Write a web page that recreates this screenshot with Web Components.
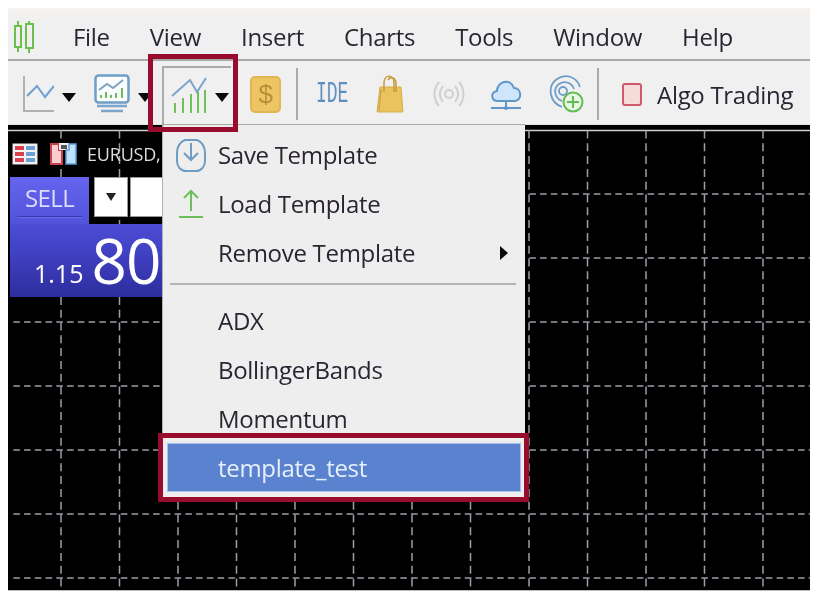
<!DOCTYPE html>
<html lang="en">
<head>
<meta charset="UTF-8">
<title>Chart templates menu</title>
<style>
    body { background: #fff; }
</style>
</head>
<body>
<mt-window>
    <mt-menubar slot="top">
        <svg slot="logo" width="22" height="34" viewBox="0 0 22 34" fill="none" stroke="#6cc04e" stroke-width="2">
            <path d="M5 1v5M5 27v5M16 1v3M16 28v5"/>
            <rect x="2" y="6" width="6" height="21"/>
            <rect x="13" y="4" width="7" height="24"/>
        </svg>
        <span>File</span><span>View</span><span>Insert</span><span>Charts</span><span>Tools</span><span>Window</span><span>Help</span>
    </mt-menubar>
    <mt-toolbar slot="top">
        <tool-btn arrow style="margin-left:14px">
            <svg width="32" height="38" viewBox="0 0 32 38" fill="none">
                <path d="M2 1v35h30" stroke="#b0b0b0" stroke-width="2"/>
                <path d="M5 21l10-10 8 11 9-11" stroke="#6f9fd0" stroke-width="2"/>
            </svg>
        </tool-btn>
        <tool-btn arrow style="margin-left:18px">
            <svg width="36" height="40" viewBox="0 0 36 40" fill="none">
                <rect x="1.5" y="1.5" width="33" height="27" rx="3" fill="#fafcfe" stroke="#6f9dc8" stroke-width="2.5"/>
                <path d="M5 16l8-6 6 4 10-8" stroke="#7ea3c4" stroke-width="2"/>
                <path d="M7 24v-3M12 24v-6M17 24v-3M22 24v-5M28 24v-10" stroke="#6dbb57" stroke-width="2"/>
                <path d="M3 32h30M7 37h22" stroke="#7aa5cc" stroke-width="2.5"/>
            </svg>
        </tool-btn>
        <tool-btn arrow selected style="margin-left:19px">
            <svg width="36" height="40" viewBox="0 0 36 40" fill="none">
                <path d="M1 22L19 6l7 12 9-14" stroke="#7ba6c9" stroke-width="2"/>
                <path d="M4 39V29M12 39V24M20 39V20M27 39V18M34 39V16" stroke="#6fc15c" stroke-width="2"/>
            </svg>
        </tool-btn>
        <tool-btn class="dollar" style="margin-left:21px"><span class="dollar-face">$</span></tool-btn>
        <tool-sep style="margin-left:15px"></tool-sep>
        <tool-btn style="margin-left:18px"><span class="ide">IDE</span></tool-btn>
        <tool-btn style="margin-left:28px">
            <svg width="28" height="38" viewBox="0 0 28 38" fill="none">
                <path d="M4 12L1 37h26l-2-25z" fill="#e8c35e" stroke="#d8ae4a" stroke-width="1"/>
                <path d="M8 17V8c0-9 10-9 10 0v9M12 5c2-4 8-3 8 4v8" stroke="#c89e42" stroke-width="1.6"/>
                <path d="M5 14L3 36" stroke="#cfa64a" stroke-width="1.4"/>
            </svg>
        </tool-btn>
        <tool-btn style="margin-left:29px">
            <svg width="32" height="26" viewBox="0 0 32 26" fill="none" stroke="#cfcfcf" stroke-width="2">
                <circle cx="16" cy="13" r="4"/>
                <path d="M10 5c-4 5-4 11 0 16M22 5c4 5 4 11 0 16M6 1C0 8 0 18 6 25M26 1c6 7 6 17 0 24"/>
            </svg>
        </tool-btn>
        <tool-btn style="margin-left:25px">
            <svg width="32" height="34" viewBox="0 0 32 34" fill="none">
                <path d="M8 24C1 24 0 15 7 14 7 5 20 0 24 11c7 0 9 11 1 13z" fill="#cfe5fb" stroke="#5f97c8" stroke-width="2"/>
                <path d="M1 31h30M16 25v6" stroke="#5f97c8" stroke-width="2"/>
                <circle cx="16" cy="31" r="2" fill="#5f97c8"/>
            </svg>
        </tool-btn>
        <tool-btn style="margin-left:26px">
            <svg width="36" height="40" viewBox="0 0 36 40" fill="none">
                <path d="M14 33C1 28-1 12 9 5c9-6 20-2 23 8" stroke="#6f9dc8" stroke-width="1.8"/>
                <path d="M14 27C6 24 5 14 11 10c6-4 13-1 15 5" stroke="#6f9dc8" stroke-width="1.8"/>
                <circle cx="15" cy="17" r="4" stroke="#6f9dc8" stroke-width="1.8"/>
                <circle cx="25" cy="28" r="9.5" fill="#eaf6e4" stroke="#62bd55" stroke-width="2"/>
                <path d="M25 22v12M19 28h12" stroke="#62bd55" stroke-width="2"/>
            </svg>
        </tool-btn>
        <tool-sep style="margin-left:13px"></tool-sep>
        <tool-btn style="margin-left:23px"><span class="check"></span></tool-btn>
        <tool-btn style="margin-left:15px"><span class="label">Algo Trading</span></tool-btn>
    </mt-toolbar>
    <mt-chart>
        <chart-grid></chart-grid>
        <symbol-bar></symbol-bar>
        <trade-panel></trade-panel>
        <drop-menu>
            <menu-item>
                <svg slot="icon" width="30" height="34" viewBox="0 0 30 34" fill="none" stroke="#6f9dc4" stroke-width="2">
                    <path d="M9 2h12c5 2 8 7 8 13v8c0 6-4 10-9 10h-10C5 33 1 29 1 23v-8C1 9 4 4 9 2z"/>
                    <path d="M15 5v17M8 15l7 7 7-7"/>
                </svg>
                Save Template
            </menu-item>
            <menu-item>
                <svg slot="icon" width="26" height="30" viewBox="0 0 26 30" fill="none" stroke="#6cbf5a" stroke-width="2">
                    <path d="M13 2v20M6 9l7-7 7 7M1 28h24"/>
                </svg>
                Load Template
            </menu-item>
            <menu-item submenu>Remove Template</menu-item>
            <menu-sep></menu-sep>
            <menu-item>ADX</menu-item>
            <menu-item>BollingerBands</menu-item>
            <menu-item>Momentum</menu-item>
            <menu-item selected>template_test</menu-item>
        </drop-menu>
    </mt-chart>
</mt-window>

<script>
    const UI_FONT = '"Open Sans", "Noto Sans", sans-serif';
    const HIGHLIGHT = '#980c2e';

    function define(name, html) {
        customElements.define(name, class extends HTMLElement {
            constructor() {
                super();
                this.attachShadow({ mode: 'open' }).innerHTML = html;
            }
        });
    }

    define('mt-window', `
        <style>
            :host {
                display: flex; flex-direction: column;
                width: 804px; height: 583px;
                font-family: ${UI_FONT};
                font-stretch: 91%;
                font-size: 24px; letter-spacing: -.3px;
                color: #2b2532;
                filter: blur(.55px);
            }
        </style>
        <slot name="top"></slot>
        <slot></slot>`);

    define('mt-menubar', `
        <style>
            :host {
                display: flex; align-items: center; gap: 40px;
                height: 53px; box-sizing: border-box;
                padding: 6px 0 0 5px;
                background: linear-gradient(#f6f2f0, #f0f0f0 14px);
                border-bottom: 2px solid #a9a9a9;
            }
            ::slotted(svg) { margin-right: -2px; }
        </style>
        <slot name="logo"></slot>
        <slot></slot>`);

    define('mt-toolbar', `
        <style>
            :host {
                display: flex; align-items: center;
                height: 63px; box-sizing: border-box;
                padding-top: 3px;
                position: relative; z-index: 2;
                background: #f0f0f0;
            }
        </style>
        <slot></slot>`);

    define('tool-btn', `
        <style>
            :host { display: inline-flex; align-items: center; position: relative; flex: none; }
            .arrow {
                display: none;
                width: 0; height: 0; margin-left: 8px; margin-top: 6px;
                border-left: 7px solid transparent; border-right: 7px solid transparent;
                border-top: 9px solid #0a0a0a;
            }
            :host([arrow]) .arrow { display: block; }
            :host([selected])::before {
                content: ""; position: absolute;
                left: -9px; right: -2px; top: -8px; height: 58px;
                border-left: 2px solid #ababab; border-top: 2px solid #ababab;
            }
            :host([selected])::after {
                content: ""; position: absolute;
                left: -23px; right: -9px; top: -20px; bottom: -18px;
                border: 5px solid ${HIGHLIGHT};
                z-index: 3;
            }
            ::slotted(svg) { display: block; }
            ::slotted(.dollar-face) {
                display: block; width: 31px; height: 37px; box-sizing: border-box;
                background: #edc562; border: 2px solid #e0b752; border-radius: 5px;
                color: #b68f3c; font-size: 26px; line-height: 33px; text-align: center;
                font-family: "Liberation Sans", sans-serif;
            }
            ::slotted(.ide) {
                display: block; width: 32px; height: 34px; line-height: 34px;
                color: #5f8fc0; font-size: 30px; letter-spacing: 0;
                font-family: "Liberation Mono", monospace;
                white-space: nowrap;
                transform: scaleX(.6); transform-origin: 0 50%;
            }
            ::slotted(.check) {
                display: block; width: 20px; height: 23px; box-sizing: border-box;
                background: #f5dcd9; border: 2px solid #cd5a66; border-radius: 3px;
            }
            ::slotted(.label) { display: block; color: #2b2532; }
        </style>
        <slot></slot>
        <span class="arrow"></span>`);

    define('tool-sep', `
        <style>
            :host { display: block; width: 2px; height: 52px; background: #ababab; flex: none; }
        </style>`);

    define('mt-chart', `
        <style>
            :host {
                display: block; flex: 1; position: relative;
                background: #000;
                border-top: 1px solid #e4e4e4;
                border-right: 1px solid #a8a8a8;
                border-bottom: 1px solid #bdbdbd;
                box-sizing: border-box;
            }
        </style>
        <slot></slot>`);

    customElements.define('chart-grid', class extends HTMLElement {
        constructor() {
            super();
            let lines = '<path class="top" d="M8 130.5h803"/>';
            for (let y = 194; y <= 578; y += 64) {
                lines += `<path d="M13.3 ${y}H811"/>`;
            }
            for (let x = 61; x < 800; x += 58.5) {
                lines += `<path class="v" d="M${x} 130.5V590"/>`;
            }
            this.attachShadow({ mode: 'open' }).innerHTML = `
                <style>
                    :host { display: block; position: absolute; inset: 0; }
                    svg { display: block; }
                    path { stroke: #9a9ea6; stroke-width: 1.5; fill: none; stroke-dasharray: 6.6 4.15; }
                    path.v { stroke-dasharray: 8 4.8; }
                    path.top { stroke: #cfcfcf; stroke-dasharray: none; }
                </style>
                <svg width="803" height="465" viewBox="8 125 803 465">${lines}</svg>`;
        }
    });

    define('symbol-bar', `
        <style>
            :host {
                display: flex; align-items: center; position: absolute;
                left: 4px; top: 18px; height: 22px;
                color: #dcdcdc; font-size: 18px; letter-spacing: -.2px;
            }
            svg { display: block; flex: none; }
            span { margin-left: 10px; white-space: nowrap; }
        </style>
        <svg width="26" height="22" viewBox="0 0 26 22">
            <rect x="1" y="1" width="24" height="20" fill="#f4f4f4" stroke="#e6e6e6"/>
            <path d="M3 5h9M3 11h9M3 17h9" stroke="#d8404f" stroke-width="4"/>
            <path d="M14 5h9M14 11h9M14 17h9" stroke="#6aa2d8" stroke-width="4"/>
        </svg>
        <svg width="27" height="22" viewBox="0 0 27 22" style="margin-left:12px">
            <path d="M1 1h8v6h3v14H1z" fill="#f7cdcd" stroke="#c9404e" stroke-width="2"/>
            <rect x="9" y="0" width="10" height="7" fill="#efefef"/>
            <rect x="11" y="2" width="6" height="4" fill="#555"/>
            <path d="M16 7h3V1h7v20H16z" fill="#bfe0fa" stroke="#5a9ed8" stroke-width="1.5"/>
        </svg>
        <span>EURUSD,</span>`);

    define('trade-panel', `
        <style>
            :host {
                display: grid; grid-template-columns: 79px 1fr; grid-template-rows: 47px 73px;
                position: absolute; left: 2px; top: 52px; width: 200px;
                color: #fff;
            }
            .sell {
                background: linear-gradient(#6464ee, #5252da);
                color: #dcdcff; font-size: 24px; letter-spacing: -.6px;
                display: flex; flex-direction: column; align-items: center;
                padding-top: 4px; box-sizing: border-box;
            }
            .sell i { display: block; width: 65px; height: 1px; background: #3a3ab0; margin-top: 2px; box-shadow: 0 1px 0 #6a6ae6; }
            .pick { background: #000; display: flex; gap: 2px; padding-left: 5px; height: 40px; }
            .pick div { background: #fff; border: 1px solid #999; box-sizing: border-box; height: 40px; display: flex; align-items: center; justify-content: center; }
            .pick .drop { width: 34px; }
            .pick .drop::after { content: ""; border-left: 5px solid transparent; border-right: 5px solid transparent; border-top: 8px solid #222; }
            .pick .val { flex: 1; }
            .price {
                grid-column: 1 / -1;
                background: linear-gradient(#4d4dd6, #3f3fc0 45%, #2d2d9e);
                display: flex; align-items: flex-start;
                padding-left: 24px;
                letter-spacing: 0;
            }
            .small { font-size: 25px; margin-top: 34px; line-height: 30px; }
            .big { font-size: 62px; line-height: 62px; margin-top: 5px; margin-left: 8px; letter-spacing: -1px; }
            .sup { font-size: 28px; line-height: 30px; margin-top: 10px; margin-left: 9px; }
        </style>
        <div class="sell">SELL<i></i></div>
        <div class="pick"><div class="drop"></div><div class="val"></div></div>
        <div class="price"><span class="small">1.15</span><span class="big">80</span><span class="sup">1</span></div>`);

    define('drop-menu', `
        <style>
            :host {
                display: block; position: absolute;
                left: 154px; top: -1px; width: 363px; height: 373px;
                box-sizing: border-box;
                padding: 5px 4px 5px 2px;
                background: #eeeeee;
                border-top: 1px solid #a8a8a8;
                border-left: 1px solid #b0b0b0;
                z-index: 1;
            }
        </style>
        <slot></slot>`);

    define('menu-item', `
        <style>
            :host {
                display: flex; align-items: center;
                height: 49px; box-sizing: border-box;
                position: relative;
                white-space: nowrap;
            }
            .icon { width: 51px; margin-left: 2px; flex: none; display: flex; justify-content: center; padding-right: 3px; box-sizing: border-box; }
            .text { flex: 1; display: block; }
            .sub {
                display: none; width: 0; height: 0; margin-right: 13px;
                border-top: 7px solid transparent; border-bottom: 7px solid transparent;
                border-left: 8px solid #0a0a0a;
            }
            :host([submenu]) .sub { display: block; }
            :host([selected]) {
                background: #5a82cf; color: #e6f0fb;
                outline: 1px solid #a6c4ea; outline-offset: -1px;
                margin-left: 2px;
            }
            :host([selected]) .icon { margin-left: 0; }
            :host([selected])::after {
                content: ""; position: absolute;
                left: -9px; right: -8px; top: -10px; bottom: -10px;
                border: 5px solid ${HIGHLIGHT};
            }
            ::slotted(svg) { display: block; }
        </style>
        <span class="icon"><slot name="icon"></slot></span>
        <span class="text"><slot></slot></span>
        <span class="sub"></span>`);

    define('menu-sep', `
        <style>
            :host { display: block; height: 2px; background: #b4b4b4; margin: 6px 5px 11px 5px; }
        </style>`);
</script>
</body>
</html>
